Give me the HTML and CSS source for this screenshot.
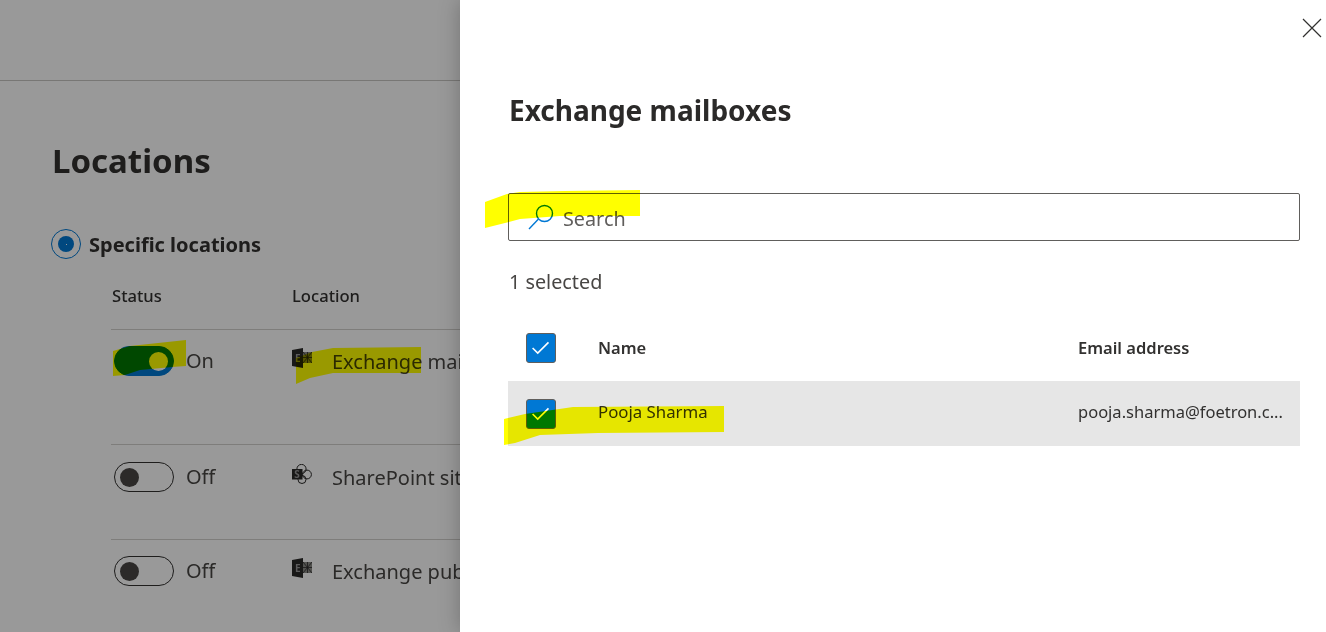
FILE: index.html
```html
<!DOCTYPE html>
<html lang="en">
<head>
  <meta charset="UTF-8">
  <title>Locations</title>
  <link rel="stylesheet" href="styles.css">
</head>
<body>
  <div class="page">
    <div class="top-bar"></div>
    <div class="content">
      <h1 class="page-title">Locations</h1>
      <div class="radio-row">
        <span class="radio"><span class="radio-dot"></span></span>
        <span class="radio-label">Specific locations</span>
      </div>
      <div class="loc-table">
        <div class="loc-row loc-head">
          <div class="col-status">Status</div>
          <div>Location</div>
        </div>
        <div class="loc-row row-tall">
          <div class="col-status">
            <span class="toggle on"><span class="thumb"></span></span>
            <span>On</span>
          </div>
          <div class="col-loc">
            <svg class="loc-icon" width="20" height="20" viewBox="0 0 20 20">
              <path d="M0 2 L11 0 V20 L0 18 Z" fill="#2b2a29"/>
              <rect x="11" y="4" width="9" height="11" fill="#8a8a86"/>
              <path d="M11 4 L20 15 M20 4 L11 15 M15.5 4 V15 M11 9.5 H20" stroke="#2b2a29" stroke-width="0.8"/>
              <text x="3" y="14" class="icon-letter">E</text>
            </svg>
            <span>Exchange mailboxes</span>
          </div>
        </div>
        <div class="loc-row row-mid">
          <div class="col-status">
            <span class="toggle"><span class="thumb"></span></span>
            <span>Off</span>
          </div>
          <div class="col-loc">
            <svg class="loc-icon" width="20" height="20" viewBox="0 0 20 20">
              <circle cx="9.5" cy="5" r="4.6" fill="none" stroke="#2b2a29"/>
              <circle cx="15" cy="10.5" r="4.4" fill="none" stroke="#2b2a29"/>
              <circle cx="10" cy="15.5" r="4" fill="none" stroke="#2b2a29"/>
              <rect x="0" y="5" width="10.5" height="10.5" fill="#2b2a29"/>
              <text x="2.2" y="14" class="icon-letter">S</text>
            </svg>
            <span>SharePoint sites</span>
          </div>
        </div>
        <div class="loc-row">
          <div class="col-status">
            <span class="toggle"><span class="thumb"></span></span>
            <span>Off</span>
          </div>
          <div class="col-loc">
            <svg class="loc-icon" width="20" height="20" viewBox="0 0 20 20">
              <path d="M0 2 L11 0 V20 L0 18 Z" fill="#2b2a29"/>
              <rect x="11" y="4" width="9" height="11" fill="#8a8a86"/>
              <path d="M11 4 L20 15 M20 4 L11 15 M15.5 4 V15 M11 9.5 H20" stroke="#2b2a29" stroke-width="0.8"/>
              <text x="3" y="14" class="icon-letter">E</text>
            </svg>
            <span>Exchange public folders</span>
          </div>
        </div>
      </div>
    </div>
  </div>

  <div class="scrim"></div>

  <div class="panel">
    <div class="panel-top">
      <svg width="20" height="20" viewBox="0 0 20 20">
        <path d="M1 1 L19 19 M19 1 L1 19" stroke="#323130" stroke-width="1.2"/>
      </svg>
    </div>
    <h2 class="panel-title">Exchange mailboxes</h2>
    <div class="search">
      <svg width="28" height="28" viewBox="0 0 28 28">
        <circle cx="17.5" cy="10.5" r="8" fill="none" stroke="#0078d4" stroke-width="1.4"/>
        <path d="M11.5 16 L2 26" stroke="#0078d4" stroke-width="1.4"/>
      </svg>
      <span class="search-text">Search</span>
    </div>
    <div class="selected-count">1 selected</div>
    <div class="mail-row mail-head">
      <span class="check">
        <svg width="30" height="30" viewBox="0 0 30 30"><path d="M6 15 L11.5 20.5 L23 9" fill="none" stroke="#fff" stroke-width="1.7"/></svg>
      </span>
      <div class="col-name">Name</div>
      <div class="col-mail">Email address</div>
    </div>
    <div class="mail-row mail-selected">
      <span class="check">
        <svg width="30" height="30" viewBox="0 0 30 30"><path d="M6 15 L11.5 20.5 L23 9" fill="none" stroke="#fff" stroke-width="1.7"/></svg>
      </span>
      <div class="col-name">Pooja Sharma</div>
      <div class="col-mail">pooja.sharma@foetron.c...</div>
    </div>
  </div>

  <!-- marker strokes drawn over the screenshot -->
  <svg class="marker" width="1326" height="632" viewBox="0 0 1326 632">
    <path d="M113 351 L130 346 L186 340 V366 L172 367 L140 370 L125 375 L113 376 Z"/>
    <path d="M296 358 L312 352 L333 348 L421 347 V373 L333 373 L310 378 L296 384 Z"/>
    <path d="M485 202 L507 194 L520 192 L565 191 L640 190 V216 L560 216 L520 219 L505 223 L485 228 Z"/>
    <path d="M504 419 L525 414 L573 407 L724 406 V432 L598 433 L540 435 L515 443 L504 445 Z"/>
  </svg>
</body>
</html>
```

FILE: styles.css
```css
* {
  box-sizing: border-box;
}
body {
  font-family: "Noto Sans", "Open Sans", sans-serif;
  margin: 0;
  width: 1326px;
  height: 632px;
  overflow: hidden;
  position: relative;
  background-color: #fff;
  color: #323130;
}
.top-bar {
  height: 81px;
  border-bottom: 1px solid #c8c6c4;
}
.content {
  padding: 56px 0 0 51px;
}
.page-title {
  font-size: 33px;
  font-weight: 700;
  line-height: 48px;
  margin: 0 0 44px 1px;
}
.radio-row {
  display: flex;
  align-items: center;
  gap: 8px;
  height: 30px;
  margin-bottom: 25px;
}
.radio {
  width: 30px;
  height: 30px;
  border-radius: 50%;
  border: 1.5px solid #0078d4;
  display: flex;
  align-items: center;
  justify-content: center;
}
.radio-dot {
  width: 16px;
  height: 16px;
  border-radius: 50%;
  background-color: #0078d4;
  display: flex;
  align-items: center;
  justify-content: center;
}
.radio-dot::after {
  content: "";
  width: 1px;
  height: 1px;
  background-color: #fff;
}
.radio-label {
  font-size: 20px;
  font-weight: 700;
}
.loc-table {
  margin-left: 60px;
}
.loc-row {
  display: flex;
  align-items: flex-start;
  font-size: 20px;
  height: 92px;
  padding-top: 16px;
  border-top: 1px solid #d2d0ce;
  white-space: nowrap;
  color: #484644;
}
.loc-row.row-tall {
  height: 115px;
}
.loc-row.row-mid {
  height: 95px;
  padding-top: 17px;
}
.loc-row.loc-head {
  font-size: 16.6px;
  font-weight: 500;
  height: 45px;
  padding-top: 0;
  border-top: 0;
  line-height: 24px;
  color: #323130;
}
.col-status {
  width: 181px;
  padding-left: 3px;
  display: flex;
  align-items: center;
  gap: 12px;
  line-height: 30px;
}
.loc-head .col-status {
  padding-left: 1px;
  line-height: 24px;
}
.col-loc {
  display: flex;
  align-items: center;
  height: 30px;
}
.loc-icon {
  flex: none;
  margin: -6px 20px 0 0;
}
.icon-letter {
  font-size: 10px;
  font-weight: 700;
  fill: #999;
}
.toggle {
  width: 60px;
  height: 30px;
  border: 1px solid #323130;
  border-radius: 15px;
  display: flex;
  align-items: center;
  padding: 0 5px;
}
.toggle.on {
  background-color: #0078d4;
  border-color: #0078d4;
  justify-content: flex-end;
}
.thumb {
  width: 19px;
  height: 19px;
  border-radius: 50%;
  background-color: #4a4745;
}
.toggle.on .thumb {
  background-color: #fff;
}
.scrim {
  position: absolute;
  left: 0;
  top: 0;
  width: 100%;
  height: 100%;
  background-color: rgba(0, 0, 0, 0.4);
}
.panel {
  position: absolute;
  left: 460px;
  top: 0;
  width: 866px;
  height: 632px;
  background-color: #fff;
  box-shadow: 0 0 20px rgba(0, 0, 0, 0.25);
  padding: 0 26px 0 48px;
}
.panel-top {
  display: flex;
  justify-content: flex-end;
  height: 88px;
  padding-top: 18px;
  margin-right: -30px;
  padding-right: 8px;
}
.panel-title {
  font-size: 28px;
  font-weight: 700;
  line-height: 44px;
  margin: 0 0 61px 1px;
  color: #2b2a29;
}
.search {
  height: 48px;
  border: 1px solid #605e5c;
  border-radius: 2px;
  display: flex;
  align-items: center;
  font-size: 19.8px;
  color: #605e5c;
  padding-left: 18px;
  gap: 8px;
}
.search-text {
  margin-top: 2px;
}
.selected-count {
  font-size: 19.8px;
  line-height: 28px;
  margin: 27px 0 0 1px;
  color: #484644;
}
.mail-row {
  display: flex;
  align-items: center;
  font-size: 17px;
  padding-left: 18px;
}
.mail-head {
  font-weight: 600;
  font-size: 16.5px;
  height: 66px;
  margin-top: 19px;
}
.mail-head .col-name,
.mail-head .col-mail {
  margin-top: -2px;
}
.mail-selected {
  height: 65px;
  background-color: #e6e6e6;
}
.check {
  width: 30px;
  height: 30px;
  flex: none;
  border: 1px solid #605e5c;
  border-radius: 3px;
  background-color: #0078d4;
  display: flex;
  align-items: center;
  justify-content: center;
}
.col-name {
  width: 480px;
  margin-left: 42px;
}
.mail-selected .col-name {
  font-size: 16.8px;
  margin-top: -5px;
}
.col-mail {
  white-space: nowrap;
}
.mail-selected .col-mail {
  font-size: 16.5px;
  margin-top: -5px;
}
.marker {
  position: absolute;
  left: 0;
  top: 0;
  mix-blend-mode: multiply;
  pointer-events: none;
}
.marker path {
  fill: #ffff00;
}
```
